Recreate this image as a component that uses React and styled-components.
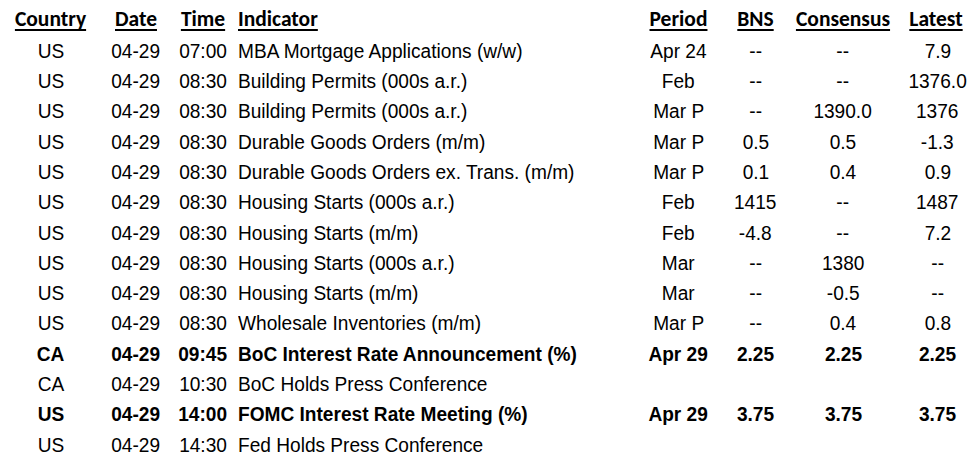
import React from "react";
import styled, { createGlobalStyle } from "styled-components";

const GlobalStyle = createGlobalStyle`
  html, body {
    margin: 0;
    padding: 0;
    background: #ffffff;
  }
`;

const rows = [
  { c: "US", d: "04-29", t: "07:00", ind: "MBA Mortgage Applications (w/w)", p: "Apr 24", bns: "--", con: "--", last: "7.9" },
  { c: "US", d: "04-29", t: "08:30", ind: "Building Permits (000s a.r.)", p: "Feb", bns: "--", con: "--", last: "1376.0" },
  { c: "US", d: "04-29", t: "08:30", ind: "Building Permits (000s a.r.)", p: "Mar P", bns: "--", con: "1390.0", last: "1376" },
  { c: "US", d: "04-29", t: "08:30", ind: "Durable Goods Orders (m/m)", p: "Mar P", bns: "0.5", con: "0.5", last: "-1.3" },
  { c: "US", d: "04-29", t: "08:30", ind: "Durable Goods Orders ex. Trans. (m/m)", p: "Mar P", bns: "0.1", con: "0.4", last: "0.9" },
  { c: "US", d: "04-29", t: "08:30", ind: "Housing Starts (000s a.r.)", p: "Feb", bns: "1415", con: "--", last: "1487" },
  { c: "US", d: "04-29", t: "08:30", ind: "Housing Starts (m/m)", p: "Feb", bns: "-4.8", con: "--", last: "7.2" },
  { c: "US", d: "04-29", t: "08:30", ind: "Housing Starts (000s a.r.)", p: "Mar", bns: "--", con: "1380", last: "--" },
  { c: "US", d: "04-29", t: "08:30", ind: "Housing Starts (m/m)", p: "Mar", bns: "--", con: "-0.5", last: "--" },
  { c: "US", d: "04-29", t: "08:30", ind: "Wholesale Inventories (m/m)", p: "Mar P", bns: "--", con: "0.4", last: "0.8" },
  { c: "CA", d: "04-29", t: "09:45", ind: "BoC Interest Rate Announcement (%)", p: "Apr 29", bns: "2.25", con: "2.25", last: "2.25", bold: true },
  { c: "CA", d: "04-29", t: "10:30", ind: "BoC Holds Press Conference", p: "", bns: "", con: "", last: "" },
  { c: "US", d: "04-29", t: "14:00", ind: "FOMC Interest Rate Meeting (%)", p: "Apr 29", bns: "3.75", con: "3.75", last: "3.75", bold: true },
  { c: "US", d: "04-29", t: "14:30", ind: "Fed Holds Press Conference", p: "", bns: "", con: "", last: "" },
];

const Calendar = () => {
  return (
    <>
      <GlobalStyle />
      <Table>
        <HeadCell><HeadText>Country</HeadText></HeadCell>
        <HeadCell><HeadText>Date</HeadText></HeadCell>
        <HeadCell><HeadText>Time</HeadText></HeadCell>
        <HeadCell $left><HeadText>Indicator</HeadText></HeadCell>
        <HeadCell><HeadText>Period</HeadText></HeadCell>
        <HeadCell><HeadText>BNS</HeadText></HeadCell>
        <HeadCell><HeadText>Consensus</HeadText></HeadCell>
        <HeadCell><HeadText>Latest</HeadText></HeadCell>

        {rows.map((r, i) => (
          <React.Fragment key={i}>
            <Cell><Txt $bold={r.bold}>{r.c}</Txt></Cell>
            <Cell><Txt $bold={r.bold}>{r.d}</Txt></Cell>
            <Cell><Txt $bold={r.bold}>{r.t}</Txt></Cell>
            <Cell $left><Txt $bold={r.bold} $left>{r.ind}</Txt></Cell>
            <Cell><Txt $bold={r.bold}>{r.p}</Txt></Cell>
            <Cell><Txt $bold={r.bold}>{r.bns}</Txt></Cell>
            <Cell><Txt $bold={r.bold}>{r.con}</Txt></Cell>
            <Cell $nudge><Txt $bold={r.bold}>{r.last}</Txt></Cell>
          </React.Fragment>
        ))}
      </Table>
    </>
  );
};

const Table = styled.div`
  display: grid;
  grid-template-columns: 101px 70px 64px 405px 77px 77px 98px 88px;
  grid-template-rows: 35.6px;
  grid-auto-rows: 30.3px;
  width: 980px;
  color: #000;
`;

const HeadCell = styled.div`
  display: flex;
  align-items: center;
  justify-content: ${(p) => (p.$left ? "flex-start" : "center")};
  padding-left: ${(p) => (p.$left ? "3px" : "0")};
  padding-top: 4px;
  white-space: nowrap;
`;

const HeadText = styled.span`
  font-family: Carlito, "Liberation Sans", sans-serif;
  font-weight: 700;
  font-size: 21.5px;
  line-height: 31px;
  text-decoration: underline;
  text-decoration-thickness: 1.5px;
  text-underline-offset: 3px;
`;

const Cell = styled.div`
  display: flex;
  align-items: center;
  justify-content: ${(p) => (p.$left ? "flex-start" : "center")};
  padding-left: ${(p) => (p.$left ? "3px" : p.$nudge ? "3px" : "0")};
  white-space: nowrap;
`;

// Arial Narrow look: Liberation Sans squeezed a little horizontally
const Txt = styled.span`
  display: inline-block;
  font-family: "Liberation Sans", Arial, sans-serif;
  font-size: 20px;
  line-height: 30px;
  font-weight: ${(p) => (p.$bold ? 700 : 400)};
  transform: scaleX(0.955);
  transform-origin: ${(p) => (p.$left ? "left" : "center")} center;
`;

export default Calendar;
